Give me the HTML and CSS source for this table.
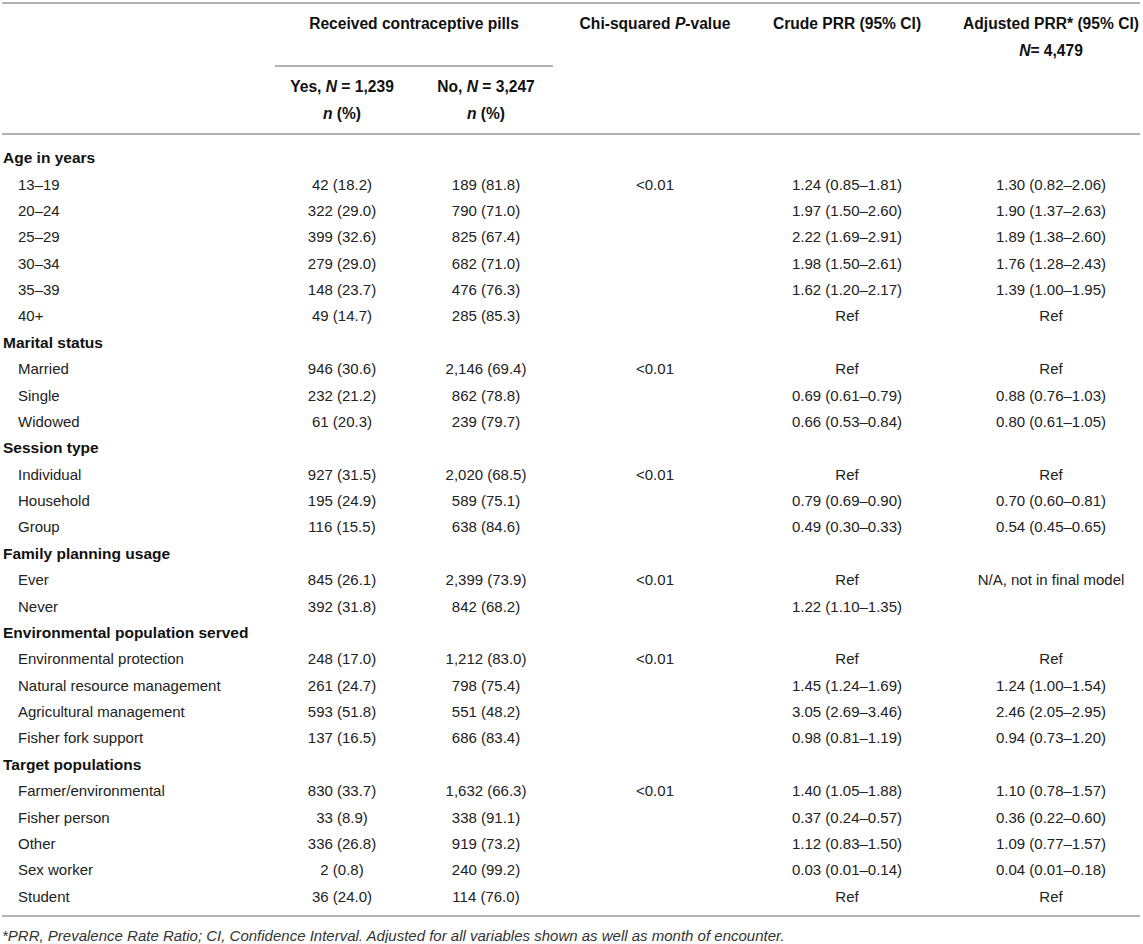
FILE: index.html
```html
<!DOCTYPE html>
<html lang="en">
<head>
<meta charset="utf-8">
<title>Received contraceptive pills</title>
<link rel="stylesheet" href="styles.css">
</head>
<body>
<table class="tbl">
  <colgroup>
    <col class="c1"><col class="c2"><col class="c3"><col class="c4"><col class="c5"><col class="c6">
  </colgroup>
  <thead>
    <tr>
      <th rowspan="2" class="hd hd-end"></th>
      <th colspan="2" class="hd span"><div class="span-rule">Received contraceptive pills</div></th>
      <th rowspan="2" class="hd hd-end">Chi-squared <i>P</i>-value</th>
      <th rowspan="2" class="hd hd-end">Crude PRR (95% CI)</th>
      <th rowspan="2" class="hd hd-end adj">Adjusted PRR* (95% CI)<br><i>N</i>= 4,479</th>
    </tr>
    <tr>
      <th class="hd2 hd-end">Yes, <i>N</i> = 1,239<br><i>n</i> (%)</th>
      <th class="hd2 hd-end">No, <i>N</i> = 3,247<br><i>n</i> (%)</th>
    </tr>
  </thead>
  <tbody>
    <tr class="grp first"><td colspan="6">Age in years</td></tr>
    <tr><td class="lbl">13–19</td><td>42 (18.2)</td><td>189 (81.8)</td><td>&lt;0.01</td><td>1.24 (0.85–1.81)</td><td class="adj">1.30 (0.82–2.06)</td></tr>
    <tr><td class="lbl">20–24</td><td>322 (29.0)</td><td>790 (71.0)</td><td></td><td>1.97 (1.50–2.60)</td><td class="adj">1.90 (1.37–2.63)</td></tr>
    <tr><td class="lbl">25–29</td><td>399 (32.6)</td><td>825 (67.4)</td><td></td><td>2.22 (1.69–2.91)</td><td class="adj">1.89 (1.38–2.60)</td></tr>
    <tr><td class="lbl">30–34</td><td>279 (29.0)</td><td>682 (71.0)</td><td></td><td>1.98 (1.50–2.61)</td><td class="adj">1.76 (1.28–2.43)</td></tr>
    <tr><td class="lbl">35–39</td><td>148 (23.7)</td><td>476 (76.3)</td><td></td><td>1.62 (1.20–2.17)</td><td class="adj">1.39 (1.00–1.95)</td></tr>
    <tr><td class="lbl">40+</td><td>49 (14.7)</td><td>285 (85.3)</td><td></td><td>Ref</td><td class="adj">Ref</td></tr>
    <tr class="grp"><td colspan="6">Marital status</td></tr>
    <tr><td class="lbl">Married</td><td>946 (30.6)</td><td>2,146 (69.4)</td><td>&lt;0.01</td><td>Ref</td><td class="adj">Ref</td></tr>
    <tr><td class="lbl">Single</td><td>232 (21.2)</td><td>862 (78.8)</td><td></td><td>0.69 (0.61–0.79)</td><td class="adj">0.88 (0.76–1.03)</td></tr>
    <tr><td class="lbl">Widowed</td><td>61 (20.3)</td><td>239 (79.7)</td><td></td><td>0.66 (0.53–0.84)</td><td class="adj">0.80 (0.61–1.05)</td></tr>
    <tr class="grp"><td colspan="6">Session type</td></tr>
    <tr><td class="lbl">Individual</td><td>927 (31.5)</td><td>2,020 (68.5)</td><td>&lt;0.01</td><td>Ref</td><td class="adj">Ref</td></tr>
    <tr><td class="lbl">Household</td><td>195 (24.9)</td><td>589 (75.1)</td><td></td><td>0.79 (0.69–0.90)</td><td class="adj">0.70 (0.60–0.81)</td></tr>
    <tr><td class="lbl">Group</td><td>116 (15.5)</td><td>638 (84.6)</td><td></td><td>0.49 (0.30–0.33)</td><td class="adj">0.54 (0.45–0.65)</td></tr>
    <tr class="grp"><td colspan="6">Family planning usage</td></tr>
    <tr><td class="lbl">Ever</td><td>845 (26.1)</td><td>2,399 (73.9)</td><td>&lt;0.01</td><td>Ref</td><td class="adj">N/A, not in final model</td></tr>
    <tr><td class="lbl">Never</td><td>392 (31.8)</td><td>842 (68.2)</td><td></td><td>1.22 (1.10–1.35)</td><td class="adj"></td></tr>
    <tr class="grp"><td colspan="6">Environmental population served</td></tr>
    <tr><td class="lbl">Environmental protection</td><td>248 (17.0)</td><td>1,212 (83.0)</td><td>&lt;0.01</td><td>Ref</td><td class="adj">Ref</td></tr>
    <tr><td class="lbl">Natural resource management</td><td>261 (24.7)</td><td>798 (75.4)</td><td></td><td>1.45 (1.24–1.69)</td><td class="adj">1.24 (1.00–1.54)</td></tr>
    <tr><td class="lbl">Agricultural management</td><td>593 (51.8)</td><td>551 (48.2)</td><td></td><td>3.05 (2.69–3.46)</td><td class="adj">2.46 (2.05–2.95)</td></tr>
    <tr><td class="lbl">Fisher fork support</td><td>137 (16.5)</td><td>686 (83.4)</td><td></td><td>0.98 (0.81–1.19)</td><td class="adj">0.94 (0.73–1.20)</td></tr>
    <tr class="grp"><td colspan="6">Target populations</td></tr>
    <tr><td class="lbl">Farmer/environmental</td><td>830 (33.7)</td><td>1,632 (66.3)</td><td>&lt;0.01</td><td>1.40 (1.05–1.88)</td><td class="adj">1.10 (0.78–1.57)</td></tr>
    <tr><td class="lbl">Fisher person</td><td>33 (8.9)</td><td>338 (91.1)</td><td></td><td>0.37 (0.24–0.57)</td><td class="adj">0.36 (0.22–0.60)</td></tr>
    <tr><td class="lbl">Other</td><td>336 (26.8)</td><td>919 (73.2)</td><td></td><td>1.12 (0.83–1.50)</td><td class="adj">1.09 (0.77–1.57)</td></tr>
    <tr><td class="lbl">Sex worker</td><td>2 (0.8)</td><td>240 (99.2)</td><td></td><td>0.03 (0.01–0.14)</td><td class="adj">0.04 (0.01–0.18)</td></tr>
    <tr class="last"><td class="lbl">Student</td><td>36 (24.0)</td><td>114 (76.0)</td><td></td><td>Ref</td><td class="adj">Ref</td></tr>
  </tbody>
</table>
<p class="note">*PRR, Prevalence Rate Ratio; CI, Confidence Interval. Adjusted for all variables shown as well as month of encounter.</p>
</body>
</html>
```
FILE: styles.css
```css
html {
  overflow: hidden;
}

html, body {
  margin: 0;
  padding: 0;
  background: #ffffff;
}

body {
  font-family: "Liberation Sans", Arial, Helvetica, sans-serif;
  color: #222;
}

.tbl {
  margin: 2px 0 0 2px;
  width: 1138px;
  table-layout: fixed;
  border-collapse: collapse;
  border-top: 2px solid #b3b3b3;
  border-bottom: 2px solid #b3b3b3;
  font-size: 15px;
}

.c1 { width: 268px; }
.c2 { width: 144px; }
.c3 { width: 144px; }
.c4 { width: 194px; }
.c5 { width: 190px; }
.c6 { width: 198px; }

.tbl th {
  font-size: 15.6px;
  font-weight: bold;
  color: #111;
  text-align: center;
  vertical-align: top;
  line-height: 27px;
  padding: 5.5px 0 0 0;
  white-space: nowrap;
}

.tbl th i { font-style: italic; }

.hd-end {
  border-bottom: 2px solid #b3b3b3;
}

.span-rule {
  margin: 0 5px;
  padding-bottom: 28.5px;
  border-bottom: 2px solid #b3b3b3;
}

.tbl th.hd2 {
  padding: 5.5px 0 6.5px 0;
}

.tbl td {
  text-align: center;
  line-height: 18px;
  padding: 4.2px 0;
  white-space: nowrap;
}

.tbl .adj {
  padding-left: 20px;
  padding-right: 0;
}

.tbl td.lbl {
  text-align: left;
  padding-left: 16px;
}

.grp td {
  text-align: left;
  font-size: 15.5px;
  font-weight: bold;
  color: #111;
  padding-left: 1px;
}

.first td {
  padding-top: 14.2px;
}

.last td {
  padding-bottom: 9px;
}

.note {
  margin: 11px 0 0 2px;
  font-size: 15px;
  line-height: 15px;
  font-style: italic;
  color: #333;
}
```
